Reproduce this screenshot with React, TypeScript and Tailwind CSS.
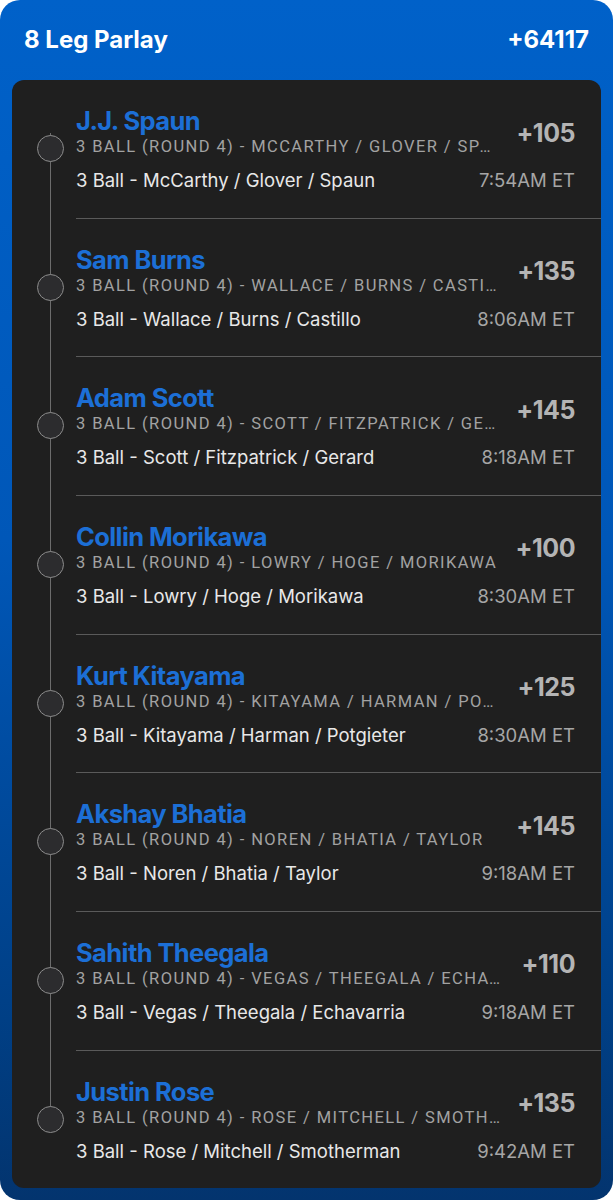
import React from "react";

const legs = [
  { name: "J.J. Spaun", sub: "3 BALL (ROUND 4) - MCCARTHY / GLOVER / SPAUN", desc: "3 Ball - McCarthy / Glover / Spaun", odds: "+105", time: "7:54AM ET" },
  { name: "Sam Burns", sub: "3 BALL (ROUND 4) - WALLACE / BURNS / CASTILLO", desc: "3 Ball - Wallace / Burns / Castillo", odds: "+135", time: "8:06AM ET" },
  { name: "Adam Scott", sub: "3 BALL (ROUND 4) - SCOTT / FITZPATRICK / GERARD", desc: "3 Ball - Scott / Fitzpatrick / Gerard", odds: "+145", time: "8:18AM ET" },
  { name: "Collin Morikawa", sub: "3 BALL (ROUND 4) - LOWRY / HOGE / MORIKAWA", desc: "3 Ball - Lowry / Hoge / Morikawa", odds: "+100", time: "8:30AM ET" },
  { name: "Kurt Kitayama", sub: "3 BALL (ROUND 4) - KITAYAMA / HARMAN / POTGIETER", desc: "3 Ball - Kitayama / Harman / Potgieter", odds: "+125", time: "8:30AM ET" },
  { name: "Akshay Bhatia", sub: "3 BALL (ROUND 4) - NOREN / BHATIA / TAYLOR", desc: "3 Ball - Noren / Bhatia / Taylor", odds: "+145", time: "9:18AM ET" },
  { name: "Sahith Theegala", sub: "3 BALL (ROUND 4) - VEGAS / THEEGALA / ECHAVARRIA", desc: "3 Ball - Vegas / Theegala / Echavarria", odds: "+110", time: "9:18AM ET" },
  { name: "Justin Rose", sub: "3 BALL (ROUND 4) - ROSE / MITCHELL / SMOTHERMAN", desc: "3 Ball - Rose / Mitchell / Smotherman", odds: "+135", time: "9:42AM ET" },
];

export default function App() {
  return (
    <div className="w-[613px] h-[1200px] bg-white font-['Inter',sans-serif]">
      <div className="h-full rounded-[20px] bg-[linear-gradient(180deg,#0061c9_0%,#0057b8_45%,#003f85_85%,#03346e_100%)] px-[12px] pb-[12px] flex flex-col">
        <div className="h-[80px] flex items-center justify-between px-[12px] pb-[1px] text-white text-[24px] font-bold tracking-[0px]">
          <span>8 Leg Parlay</span>
          <span>+64117</span>
        </div>
        <div className="relative flex-1 bg-[#1f1f1f] rounded-[12px] overflow-hidden">
          <div className="absolute left-[37.5px] top-[53px] h-[999px] w-[1.5px] bg-[#6c6c6c]" />
          {legs.map((l, i) => (
            <div key={i} className="relative h-[138.67px] pl-[64px]">
              <div className="absolute left-[25px] top-[55px] w-[27px] h-[27px] rounded-full border-[1.5px] border-[#8c8c8c] bg-[#2c2c2e]" />
              <div className={`h-full flex flex-col pt-[27px] pr-[26px] ${i < legs.length - 1 ? "border-b border-[#5a5a5a]" : ""}`}>
                <div className="flex items-center">
                  <div className="flex-1 min-w-0">
                    <div className="text-[#1c6fd6] text-[25.5px] font-bold leading-[28px] tracking-[-0.6px]">{l.name}</div>
                    <div className="text-[#a2a2a2] text-[16.5px] leading-[23px] tracking-[1.4px] truncate font-['Roboto',sans-serif]">{l.sub}</div>
                  </div>
                  <div className="w-[73px] shrink-0 text-right text-[#b4b4b4] text-[25px] font-bold leading-[26px] tracking-[-0.5px]">{l.odds}</div>
                </div>
                <div className="flex items-center justify-between mt-[10px] leading-[24px] text-[18.5px]">
                  <span className="text-[#e8e8e8]">{l.desc}</span>
                  <span className="text-[#a6a6a6]">{l.time}</span>
                </div>
              </div>
            </div>
          ))}
        </div>
      </div>
    </div>
  );
}
